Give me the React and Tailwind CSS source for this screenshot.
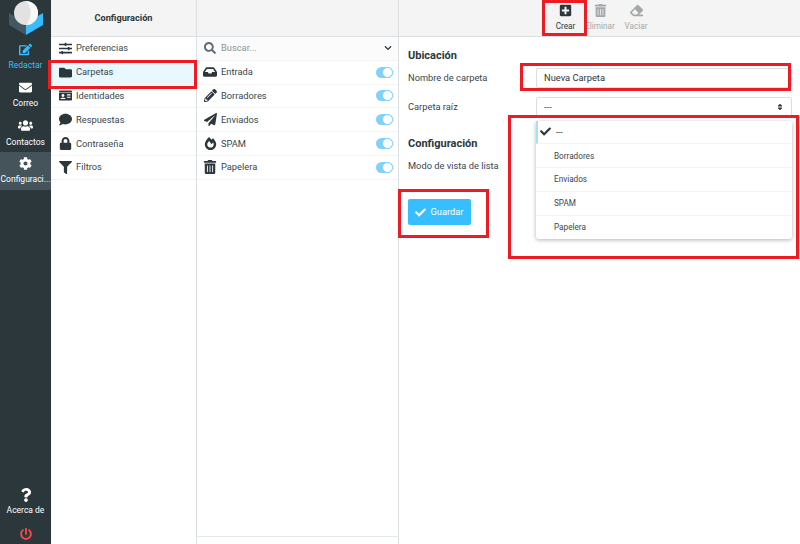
import {
  FaSlidersH, FaFolder, FaIdCard, FaComment, FaLock, FaFilter, FaEdit, FaEnvelope, FaUsers, FaCog,
  FaQuestion, FaPowerOff, FaSearch, FaChevronDown, FaPencilAlt, FaPaperPlane, FaTrashAlt,
  FaPlusSquare, FaEraser, FaCheck, FaSort, FaInbox, FaFireAlt,
} from 'react-icons/fa'

const navItems = [
  { label: 'Redactar', icon: FaEdit, color: 'text-[#37beff]', size: 13 },
  { label: 'Correo', icon: FaEnvelope, color: 'text-white', size: 13 },
  { label: 'Contactos', icon: FaUsers, color: 'text-white', size: 15 },
  { label: 'Configuraci...', icon: FaCog, color: 'text-white', size: 13, active: true },
]

const settings = [
  { label: 'Preferencias', icon: FaSlidersH },
  { label: 'Carpetas', icon: FaFolder, selected: true },
  { label: 'Identidades', icon: FaIdCard },
  { label: 'Respuestas', icon: FaComment },
  { label: 'Contraseña', icon: FaLock },
  { label: 'Filtros', icon: FaFilter },
]

const folders = [
  { label: 'Entrada', icon: FaInbox, size: 14 },
  { label: 'Borradores', icon: FaPencilAlt, size: 13 },
  { label: 'Enviados', icon: FaPaperPlane, size: 13 },
  { label: 'SPAM', icon: FaFireAlt, size: 13 },
  { label: 'Papelera', icon: FaTrashAlt, size: 14 },
]

const parents = ['Borradores', 'Enviados', 'SPAM', 'Papelera']

function Toggle() {
  return (
    <span className="flex h-[11px] w-[17px] justify-end rounded-full bg-[#7fd3fb]">
      <span className="h-[11px] w-[11px] rounded-full border border-[#7fd3fb] bg-white" />
    </span>
  )
}

function RedBox({ className }) {
  return <div className={`pointer-events-none absolute border-[3px] border-[#ed1c24] ${className}`} />
}

export default function App() {
  return (
    <div className="relative flex h-[544px] w-[800px] overflow-hidden bg-white font-['Roboto',sans-serif] text-[9.3px] text-[#37474f]">
      <aside className="flex w-[51px] shrink-0 flex-col items-stretch bg-[#2c373c] text-white">
        <div className="h-[38px] shrink-0">
          <svg width="51" height="38" viewBox="0 0 51 38">
            <path d="M9 13 L26 23 L26 35 L9 25 Z" fill="#47575e" />
            <path d="M26 23 L43 13 L43 25 L26 35 Z" fill="#37beff" />
            <circle cx="26" cy="13" r="12" fill="#e2e2e2" />
            <path d="M26 1 A12 12 0 0 1 26 25 A18 18 0 0 0 26 1 Z" fill="#f8f8f8" />
          </svg>
        </div>
        <nav className="flex flex-col">
          {navItems.map(({ label, icon: Icon, color, size, active }) => (
            <div key={label} className={`flex h-[38px] flex-col items-center justify-center gap-[4px] ${active ? 'bg-[#45545b]' : ''}`}>
              <Icon size={size} className={color} />
              <span className={`whitespace-nowrap text-[8.5px] leading-[11px] ${color}`}>{label}</span>
            </div>
          ))}
        </nav>
        <div className="mt-auto flex flex-col items-center pb-[4px]">
          <FaQuestion size={14} className="text-white" />
          <span className="mt-[3px] text-[8.5px] leading-[11px]">Acerca de</span>
          <FaPowerOff size={12} className="mt-[12px] text-[#ef4b4b]" />
        </div>
      </aside>

      <section className="flex w-[146px] shrink-0 flex-col border-r border-[#d9dfe2]">
        <header className="flex h-[37px] shrink-0 items-center justify-center border-b border-[#d9dfe2] bg-[#f4f4f4] text-[9.2px] font-bold text-[#2c373c]">
          Configuración
        </header>
        {settings.map(({ label, icon: Icon, selected }) => (
          <div key={label} className={`flex h-[23.8px] items-center border-b border-[#f4f4f4] pl-[5px] ${selected ? 'bg-[#e9f7fe]' : ''}`}>
            <span className="flex w-[18px] justify-center text-[#2c373c]"><Icon size={13} /></span>
            <span className="ml-[2px]">{label}</span>
          </div>
        ))}
      </section>

      <section className="flex w-[202px] shrink-0 flex-col border-r border-[#d9dfe2]">
        <div className="h-[37px] shrink-0 border-b border-[#d9dfe2] bg-[#f4f4f4]" />
        <div className="flex h-[23.8px] shrink-0 items-center border-b border-[#f4f4f4] bg-[#fbfbfb] pl-[7px] pr-[6px]">
          <FaSearch size={12} className="text-[#5f6b70]" />
          <span className="ml-[5px] flex-1 text-[#8a9398]">Buscar...</span>
          <FaChevronDown size={8} className="text-[#2c373c]" />
        </div>
        {folders.map(({ label, icon: Icon, size }) => (
          <div key={label} className="flex h-[23.8px] shrink-0 items-center border-b border-[#f4f4f4] pl-[6px] pr-[5px]">
            <span className="flex w-[14px] justify-center text-[#2c373c]"><Icon size={size} /></span>
            <span className="ml-[4px] flex-1">{label}</span>
            <Toggle />
          </div>
        ))}
        <div className="mt-auto h-[8px] border-t border-[#e6e9ea]" />
      </section>

      <main className="flex min-w-0 flex-1 flex-col">
        <header className="flex h-[37px] shrink-0 items-start justify-center border-b border-[#d9dfe2] bg-[#f4f4f4] pl-[1px] pt-[4px] text-[8.2px] leading-[10px]">
          <div className="flex w-[36px] flex-col items-center gap-[4px] text-[#2c373c]">
            <FaPlusSquare size={13} />
            <span>Crear</span>
          </div>
          <div className="flex w-[33px] flex-col items-center gap-[4px] text-[#a3a9ab]">
            <FaTrashAlt size={13} />
            <span>Eliminar</span>
          </div>
          <div className="ml-[3px] flex w-[33px] flex-col items-center gap-[4px] text-[#a3a9ab]">
            <FaEraser size={13} />
            <span>Vaciar</span>
          </div>
        </header>

        <div className="relative flex-1 pl-[9px] pr-[8px]">
          <h2 className="mt-[12px] text-[11px] font-bold leading-[13px] text-[#2c373c]">Ubicación</h2>
          <div className="mt-[2px] flex h-[27px] items-center">
            <label className="w-[128px]">Nombre de carpeta</label>
            <div className="flex h-[20px] flex-1 items-center rounded-[2px] border border-[#d9dfe2] px-[7px] text-[#2c373c]">Nueva Carpeta</div>
          </div>
          <div className="mt-[2px] flex h-[27px] items-center">
            <label className="w-[128px]">Carpeta raíz</label>
            <div className="flex h-[20px] flex-1 items-center justify-between rounded-[2px] border border-[#d9dfe2] px-[7px]">
              <span>---</span>
              <FaSort size={8} className="text-[#2c373c]" />
            </div>
          </div>
          <h2 className="mt-[17px] text-[11px] font-bold leading-[13px] text-[#2c373c]">Configuración</h2>
          <div className="mt-[10px] leading-[12px]">Modo de vista de lista</div>
          <button className="mt-[27px] flex h-[26px] w-[63px] items-center justify-center gap-[4px] rounded-[2px] bg-[#37beff] text-white">
            <FaCheck size={11} />
            Guardar
          </button>

          <div className="absolute left-[137px] right-[8px] top-[83.5px] rounded-[3px] bg-white shadow-[0_1px_4px_rgba(0,0,0,0.3)]">
            <div className="flex h-[23.8px] items-center border-b border-l-2 border-[#f4f4f4] border-l-[#a9def8] text-[8.2px] text-[#2c373c]">
              <FaCheck size={11} className="ml-[2px] text-[#2c373c]" />
              <span className="ml-[5px]">---</span>
            </div>
            {parents.map((name) => (
              <div key={name} className="flex h-[23.8px] items-center border-b border-[#f4f4f4] pl-[18px] text-[8.2px] last:border-b-0">{name}</div>
            ))}
          </div>
        </div>
      </main>

      <RedBox className="left-[542px] top-0 h-[36px] w-[45px]" />
      <RedBox className="left-[48px] top-[60px] h-[29px] w-[149px]" />
      <RedBox className="left-[520px] top-[63px] h-[28px] w-[271px]" />
      <RedBox className="left-[508px] top-[115px] h-[144px] w-[291px]" />
      <RedBox className="left-[398px] top-[189px] h-[49px] w-[91px]" />
    </div>
  )
}
